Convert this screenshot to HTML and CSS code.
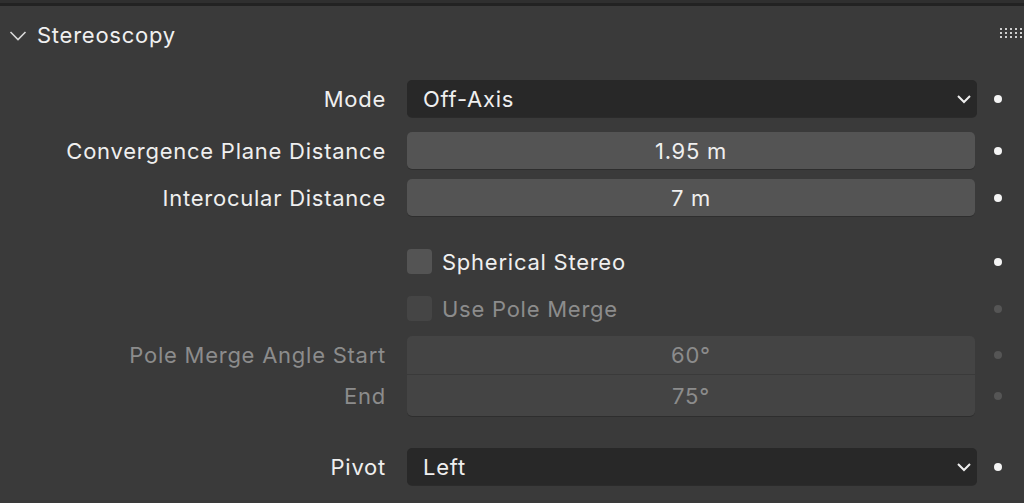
FILE: index.html
```html
<!DOCTYPE html>
<html>
<head>
<meta charset="utf-8">
<link rel="stylesheet" href="styles.css">
</head>
<body>
<div class="topbar"></div>
<div class="panel">
  <div class="header">
    <svg class="hchev" width="18" height="12" viewBox="0 0 18 12"><path d="M1.5 2 L9 9.5 L16.5 2" fill="none" stroke="#d8d8d8" stroke-width="1.6"/></svg>
    <span class="title">Stereoscopy</span>
    <svg class="grip" width="22" height="12" viewBox="0 0 22 12">
      <g fill="#cfcfcf">
        <rect x="0" y="1" width="2" height="2"/><rect x="5" y="1" width="2" height="2"/><rect x="10" y="1" width="2" height="2"/><rect x="15" y="1" width="2" height="2"/><rect x="20" y="1" width="2" height="2"/>
        <rect x="0" y="5" width="2" height="2"/><rect x="5" y="5" width="2" height="2"/><rect x="10" y="5" width="2" height="2"/><rect x="15" y="5" width="2" height="2"/><rect x="20" y="5" width="2" height="2"/>
        <rect x="0" y="9" width="2" height="2"/><rect x="5" y="9" width="2" height="2"/><rect x="10" y="9" width="2" height="2"/><rect x="15" y="9" width="2" height="2"/><rect x="20" y="9" width="2" height="2"/>
      </g>
    </svg>
  </div>

  <div class="row r-mode">
    <div class="label">Mode</div>
    <div class="field dropdown"><span>Off-Axis</span>
      <svg class="dchev" width="16" height="10" viewBox="0 0 16 10"><path d="M2 2 L8 8 L14 2" fill="none" stroke="#eeeeee" stroke-width="2"/></svg>
    </div>
    <div class="dotcell"><span class="dot"></span></div>
  </div>

  <div class="row r-conv">
    <div class="label">Convergence Plane Distance</div>
    <div class="field number">1.95 m</div>
    <div class="dotcell"><span class="dot"></span></div>
  </div>

  <div class="row r-inter">
    <div class="label">Interocular Distance</div>
    <div class="field number">7 m</div>
    <div class="dotcell"><span class="dot"></span></div>
  </div>

  <div class="row r-sph">
    <div class="label"></div>
    <div class="check"><span class="box"></span><span class="ctext">Spherical Stereo</span></div>
    <div class="dotcell"><span class="dot"></span></div>
  </div>

  <div class="row r-pole disabled">
    <div class="label"></div>
    <div class="check"><span class="box"></span><span class="ctext">Use Pole Merge</span></div>
    <div class="dotcell"><span class="dot"></span></div>
  </div>

  <div class="row r-start disabled">
    <div class="label">Pole Merge Angle Start</div>
    <div class="field number top">60°</div>
    <div class="dotcell"><span class="dot"></span></div>
  </div>

  <div class="row r-end disabled">
    <div class="label">End</div>
    <div class="field number bottom">75°</div>
    <div class="dotcell"><span class="dot"></span></div>
  </div>

  <div class="row r-pivot">
    <div class="label">Pivot</div>
    <div class="field dropdown"><span>Left</span>
      <svg class="dchev" width="16" height="10" viewBox="0 0 16 10"><path d="M2 2 L8 8 L14 2" fill="none" stroke="#eeeeee" stroke-width="2"/></svg>
    </div>
    <div class="dotcell"><span class="dot"></span></div>
  </div>
</div>
</body>
</html>
```
FILE: styles.css
```css
html, body {
  margin: 0;
  padding: 0;
  background: #3a3a3a;
  width: 1024px;
  height: 503px;
  overflow: hidden;
  font-family: Inter, "Noto Sans", "DejaVu Sans", sans-serif;
  color: #efefef;
  font-size: 22px;
  font-weight: 400;
  letter-spacing: 0.75px;
}

.topbar {
  height: 3px;
  background: #2f2f2f;
  border-bottom: 3px solid #222222;
}

.panel {
  display: flex;
  flex-direction: column;
}

.header {
  height: 58px;
  display: flex;
  align-items: center;
  padding-left: 9px;
}

.hchev {
  margin-right: 10px;
  margin-top: 1px;
}

.title {
  color: #f0f0f0;
  flex: 1;
}

.grip {
  margin-right: 2px;
  margin-top: -4px;
}

.row {
  display: grid;
  grid-template-columns: 407px 570px 47px;
  align-items: center;
}

.label {
  text-align: right;
  padding-right: 21px;
  white-space: nowrap;
}

.field {
  height: 37px;
  border-radius: 5px;
  box-sizing: border-box;
  display: flex;
  align-items: center;
}

.dropdown {
  background: #282828;
  padding-left: 16px;
  padding-right: 5px;
  justify-content: space-between;
  box-shadow: 0 1px 0 rgba(0,0,0,0.25);
}

.number {
  background: #545454;
  justify-content: center;
  width: 568px;
  box-shadow: 0 1px 0 rgba(0,0,0,0.2);
}

.dotcell {
  display: flex;
  justify-content: center;
  padding-right: 6px;
}

.dot {
  width: 8px;
  height: 8px;
  border-radius: 50%;
  background: #f4f4f4;
}

.check {
  display: flex;
  align-items: center;
  height: 37px;
}

.box {
  width: 25px;
  height: 25px;
  border-radius: 4px;
  background: #545454;
  margin-right: 10px;
}

.r-mode { margin-top: 16px; }
.r-conv { margin-top: 15px; }
.r-inter { margin-top: 10px; }
.r-sph { margin-top: 27px; }
.r-pole { margin-top: 10px; }
.r-start { margin-top: 9px; }
.r-end { margin-top: 1px; }
.r-pivot { margin-top: 32px; }

.disabled { color: #8c8c8c; }
.disabled .dot { background: #555555; }
.disabled .box { background: #454545; }
.disabled .number { background: #444444; color: #8c8c8c; }

.top {
  height: 38px;
  border-radius: 5px 5px 0 0;
  box-shadow: none;
}
.bottom {
  height: 41px;
  border-radius: 0 0 5px 5px;
}
```
